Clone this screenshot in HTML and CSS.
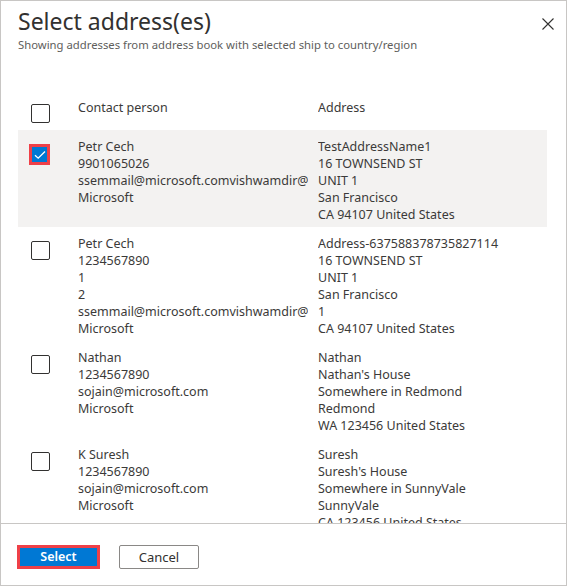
FILE: index.html
```html
<!DOCTYPE html>
<html>
<head>
<meta charset="utf-8">
<link rel="stylesheet" href="styles.css">
</head>
<body>
<div class="dialog">
  <div class="head">
    <div class="title-row">
      <h1 class="title">Select address(es)</h1>
      <button class="close" aria-label="Close">
        <svg width="12" height="12" viewBox="0 0 12 12"><path d="M0.5 0.5 L11.5 11.5 M11.5 0.5 L0.5 11.5" stroke="#323130" stroke-width="1.1" fill="none"/></svg>
      </button>
    </div>
    <div class="subtitle">Showing addresses from address book with selected ship to country/region</div>
  </div>
  <div class="list">
    <div class="col-head">
      <div class="cb-cell"><span class="cb"></span></div>
      <div class="col contact">Contact person</div>
      <div class="col address">Address</div>
    </div>
    <div class="row selected">
      <div class="cb-cell"><span class="cb checked">
        <svg width="12" height="10" viewBox="0 0 12 10"><path d="M1 5.2 L4.2 8.2 L11 1.5" stroke="#fff" stroke-width="1.3" fill="none"/></svg>
      </span></div>
      <div class="col contact">
        <div>Petr Cech</div><div>9901065026</div><div>ssemmail@microsoft.comvishwamdir@microsoft.com</div><div>Microsoft</div>
      </div>
      <div class="col address">
        <div>TestAddressName1</div><div>16 TOWNSEND ST</div><div>UNIT 1</div><div>San Francisco</div><div>CA 94107 United States</div>
      </div>
    </div>
    <div class="row">
      <div class="cb-cell"><span class="cb"></span></div>
      <div class="col contact">
        <div>Petr Cech</div><div>1234567890</div><div>1</div><div>2</div><div>ssemmail@microsoft.comvishwamdir@microsoft.com</div><div>Microsoft</div>
      </div>
      <div class="col address">
        <div>Address-637588378735827114</div><div>16 TOWNSEND ST</div><div>UNIT 1</div><div>San Francisco</div><div>1</div><div>CA 94107 United States</div>
      </div>
    </div>
    <div class="row">
      <div class="cb-cell"><span class="cb"></span></div>
      <div class="col contact">
        <div>Nathan</div><div>1234567890</div><div>sojain@microsoft.com</div><div>Microsoft</div>
      </div>
      <div class="col address">
        <div>Nathan</div><div>Nathan's House</div><div>Somewhere in Redmond</div><div>Redmond</div><div>WA 123456 United States</div>
      </div>
    </div>
    <div class="row">
      <div class="cb-cell"><span class="cb"></span></div>
      <div class="col contact">
        <div>K Suresh</div><div>1234567890</div><div>sojain@microsoft.com</div><div>Microsoft</div>
      </div>
      <div class="col address">
        <div>Suresh</div><div>Suresh's House</div><div>Somewhere in SunnyVale</div><div>SunnyVale</div><div>CA 123456 United States</div>
      </div>
    </div>
  </div>
  <div class="foot">
    <button class="btn primary">Select</button>
    <button class="btn secondary">Cancel</button>
  </div>
</div>
</body>
</html>
```

FILE: styles.css
```css
* { box-sizing: border-box; }
html, body { margin: 0; padding: 0; background: #fff; }
body {
  font-family: "Noto Sans", "Open Sans", sans-serif;
  color: #323130;
}
.dialog {
  width: 567px;
  height: 586px;
  border: 1px solid #c8c6c4;
  display: flex;
  flex-direction: column;
  overflow: hidden;
}
.head { padding: 4px 0 0 17px; }
.title-row { display: flex; align-items: flex-start; justify-content: space-between; }
.title {
  margin: 0;
  font-size: 23px;
  line-height: 32px;
  font-weight: 400;
  color: #323130;
}
.close {
  border: 0;
  background: none;
  padding: 0;
  margin: 13px 12px 0 0;
  width: 12px;
  height: 12px;
  display: flex;
}
.subtitle {
  font-size: 11.3px;
  line-height: 16px;
  color: #605e5c;
}
.list {
  flex: 1;
  overflow: hidden;
  padding: 43px 19px 0 17px;
}
.col-head, .row {
  display: grid;
  grid-template-columns: 50px 230px 1fr;
  column-gap: 10px;
  font-size: 12.5px;
  line-height: 17px;
  color: #3b3a39;
}
.col-head { height: 34px; padding-top: 3px; }
.col-head .cb { margin-top: 5px; }
.row { padding: 8px 0 4px; }
.row.selected { background: #f3f2f1; }
.cb-cell { padding-left: 13px; }
.row .cb { margin-top: 6px; }
.col { white-space: nowrap; overflow: hidden; }
.col > div { overflow: hidden; }
.cb {
  display: flex;
  align-items: center;
  justify-content: center;
  width: 19px;
  height: 19px;
  border: 1px solid #323130;
  border-radius: 2px;
  background: #fff;
}
.cb.checked {
  width: 21px;
  height: 21px;
  margin-left: -2px;
  border: 3px solid #ef4048;
  border-radius: 0;
  background: #0078d4;
}
.foot {
  height: 62px;
  border-top: 1px solid #c8c6c4;
  padding: 21px 0 0 16px;
  display: flex;
  align-items: flex-start;
  gap: 19px;
}
.btn {
  height: 24px;
  font-family: "Noto Sans", "Open Sans", sans-serif;
  font-size: 12.5px;
  line-height: 16px;
  padding: 0;
  border-radius: 0;
  cursor: pointer;
}
.primary {
  width: 83px;
  background: #0078d4;
  color: #fff;
  font-weight: 600;
  border: 3px solid #ef4048;
}
.secondary {
  width: 80px;
  background: #fff;
  color: #323130;
  font-size: 13px;
  border: 1px solid #8a8886;
  border-radius: 2px;
}
```
